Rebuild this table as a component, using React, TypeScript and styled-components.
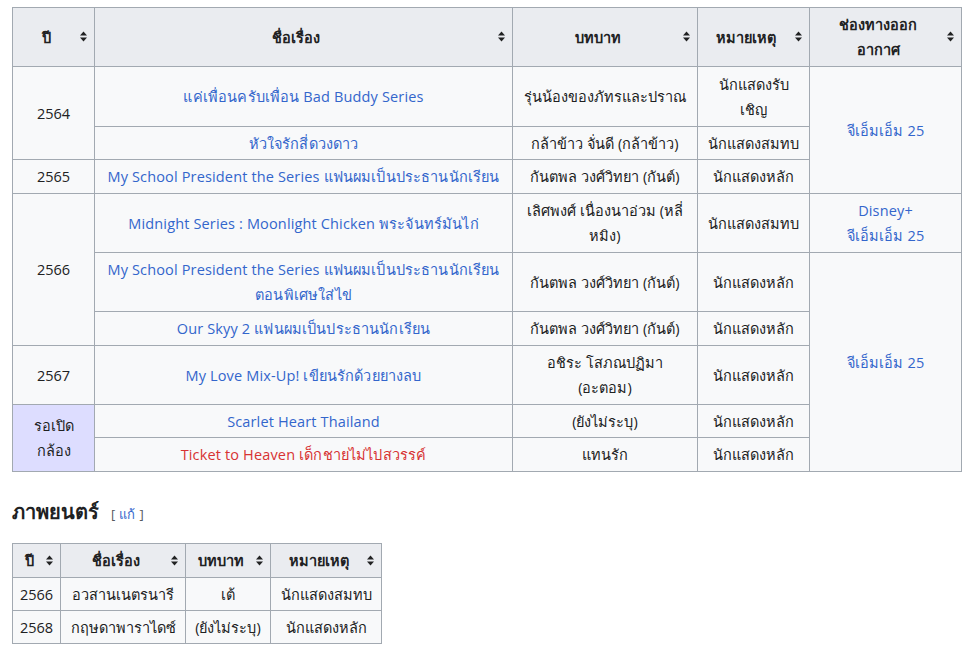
import React from "react";
import styled, { createGlobalStyle } from "styled-components";

const Global = createGlobalStyle`
  html, body { margin: 0; padding: 0; background: #ffffff; }
  body {
    font-family: "Open Sans", "Noto Sans", "DejaVu Sans", sans-serif;
    font-size: 14.5px;
    color: #202122;
  }
`;

const Page = styled.div`
  padding: 7px 4px 0 12px;
`;

const Table = styled.table<{ $w: number }>`
  border-collapse: collapse;
  table-layout: fixed;
  width: ${(p) => p.$w}px;
  background: #f8f9fa;
  color: #202122;
  border: 1px solid #a2a9b1;
`;

const Th = styled.th<{ $h?: number }>`
  position: relative;
  background: #eaecf0;
  border: 1px solid #a2a9b1;
  font-weight: bold;
  text-align: center;
  line-height: 25px;
  padding: 3px 21px 3px 6px;
  height: ${(p) => p.$h ?? 50}px;
  box-sizing: border-box;
`;

const Td = styled.td<{ $pending?: boolean; $h?: number }>`
  border: 1px solid #a2a9b1;
  text-align: center;
  line-height: 25px;
  padding: 3px 6px;
  background: ${(p) => (p.$pending ? "#ddddff" : "transparent")};
  height: ${(p) => p.$h ?? 33}px;
  box-sizing: border-box;
  white-space: nowrap;
`;

const Link = styled.a<{ $red?: boolean }>`
  color: ${(p) => (p.$red ? "#d73333" : "#3366cc")};
  text-decoration: none;
  letter-spacing: 0.15px;
`;

const SortIconBox = styled.span`
  position: absolute;
  right: 6px;
  top: 50%;
  width: 9px;
  height: 11px;
  margin-top: -6px;
  display: flex;
`;

const SortIcon = () => (
  <SortIconBox>
    <svg width="9" height="11" viewBox="0 0 9 11">
      <path d="M4.5 0.5 L8 4.5 L1 4.5 Z" fill="#202122" />
      <path d="M1 6.5 L8 6.5 L4.5 10.5 Z" fill="#202122" />
    </svg>
  </SortIconBox>
);

const Heading = styled.h3`
  margin: 27px 0 16px 0;
  display: flex;
  align-items: baseline;
  gap: 12px;
  font-size: 20px;
  font-weight: bold;
  line-height: 26px;
`;

const EditSection = styled.span`
  font-size: 13px;
  font-weight: normal;
  color: #54595d;
  display: flex;
  gap: 4px;
`;

const H = ({ children, h }: { children: React.ReactNode; h?: number }) => (
  <Th $h={h}>
    {children}
    <SortIcon />
  </Th>
);

const Role = "กันตพล วงศ์วิทยา (กันต์)";
const Main = "นักแสดงหลัก";

export default function App() {
  return (
    <>
      <Global />
      <Page>
        <Table $w={949}>
          <colgroup>
            <col style={{ width: 82 }} />
            <col style={{ width: 418 }} />
            <col style={{ width: 185 }} />
            <col style={{ width: 112 }} />
            <col style={{ width: 152 }} />
          </colgroup>
          <thead>
            <tr>
              <H h={59}>ปี</H>
              <H h={59}>ชื่อเรื่อง</H>
              <H h={59}>บทบาท</H>
              <H h={59}>หมายเหตุ</H>
              <H h={59}>
                ช่องทางออก
                <br />
                อากาศ
              </H>
            </tr>
          </thead>
          <tbody>
            <tr>
              <Td rowSpan={2}>2564</Td>
              <Td $h={60}>
                <Link>แค่เพื่อนครับเพื่อน Bad Buddy Series</Link>
              </Td>
              <Td $h={60}>รุ่นน้องของภัทรและปราณ</Td>
              <Td $h={60}>
                นักแสดงรับ
                <br />
                เชิญ
              </Td>
              <Td rowSpan={3}>
                <Link>จีเอ็มเอ็ม 25</Link>
              </Td>
            </tr>
            <tr>
              <Td>
                <Link>หัวใจรักสี่ดวงดาว</Link>
              </Td>
              <Td>กล้าข้าว จั่นดี (กล้าข้าว)</Td>
              <Td>นักแสดงสมทบ</Td>
            </tr>
            <tr>
              <Td $h={34}>2565</Td>
              <Td $h={34}>
                <Link>My School President the Series แฟนผมเป็นประธานนักเรียน</Link>
              </Td>
              <Td $h={34}>{Role}</Td>
              <Td $h={34}>{Main}</Td>
            </tr>
            <tr>
              <Td rowSpan={3}>2566</Td>
              <Td $h={59}>
                <Link>Midnight Series : Moonlight Chicken พระจันทร์มันไก่</Link>
              </Td>
              <Td $h={59}>
                เลิศพงศ์ เนื่องนาอ่วม (หลี่
                <br />
                หมิง)
              </Td>
              <Td $h={59}>นักแสดงสมทบ</Td>
              <Td $h={59}>
                <Link>Disney+</Link>
                <br />
                <Link>จีเอ็มเอ็ม 25</Link>
              </Td>
            </tr>
            <tr>
              <Td $h={59}>
                <Link>
                  My School President the Series แฟนผมเป็นประธานนักเรียน
                  <br />
                  ตอนพิเศษใส่ไข่
                </Link>
              </Td>
              <Td $h={59}>{Role}</Td>
              <Td $h={59}>{Main}</Td>
              <Td rowSpan={5}>
                <Link>จีเอ็มเอ็ม 25</Link>
              </Td>
            </tr>
            <tr>
              <Td $h={34}>
                <Link>Our Skyy 2 แฟนผมเป็นประธานนักเรียน</Link>
              </Td>
              <Td $h={34}>{Role}</Td>
              <Td $h={34}>{Main}</Td>
            </tr>
            <tr>
              <Td $h={59}>2567</Td>
              <Td $h={59}>
                <Link>My Love Mix-Up! เขียนรักด้วยยางลบ</Link>
              </Td>
              <Td $h={59}>
                อชิระ โสภณปฏิมา
                <br />
                (อะตอม)
              </Td>
              <Td $h={59}>{Main}</Td>
            </tr>
            <tr>
              <Td rowSpan={2} $pending>
                รอเปิด
                <br />
                กล้อง
              </Td>
              <Td>
                <Link>Scarlet Heart Thailand</Link>
              </Td>
              <Td>(ยังไม่ระบุ)</Td>
              <Td>{Main}</Td>
            </tr>
            <tr>
              <Td $h={34}>
                <Link $red>Ticket to Heaven เด็กชายไม่ไปสวรรค์</Link>
              </Td>
              <Td $h={34}>แทนรัก</Td>
              <Td $h={34}>{Main}</Td>
            </tr>
          </tbody>
        </Table>

        <Heading>
          ภาพยนตร์
          <EditSection>
            <span>[</span>
            <Link>แก้</Link>
            <span>]</span>
          </EditSection>
        </Heading>

        <Table $w={369}>
          <colgroup>
            <col style={{ width: 48 }} />
            <col style={{ width: 125 }} />
            <col style={{ width: 85 }} />
            <col style={{ width: 111 }} />
          </colgroup>
          <thead>
            <tr>
              <H h={34}>ปี</H>
              <H h={34}>ชื่อเรื่อง</H>
              <H h={34}>บทบาท</H>
              <H h={34}>หมายเหตุ</H>
            </tr>
          </thead>
          <tbody>
            <tr>
              <Td>2566</Td>
              <Td>อวสานเนตรนารี</Td>
              <Td>เต้</Td>
              <Td>นักแสดงสมทบ</Td>
            </tr>
            <tr>
              <Td>2568</Td>
              <Td>กฤษดาพาราไดซ์</Td>
              <Td>(ยังไม่ระบุ)</Td>
              <Td>{Main}</Td>
            </tr>
          </tbody>
        </Table>
      </Page>
    </>
  );
}
